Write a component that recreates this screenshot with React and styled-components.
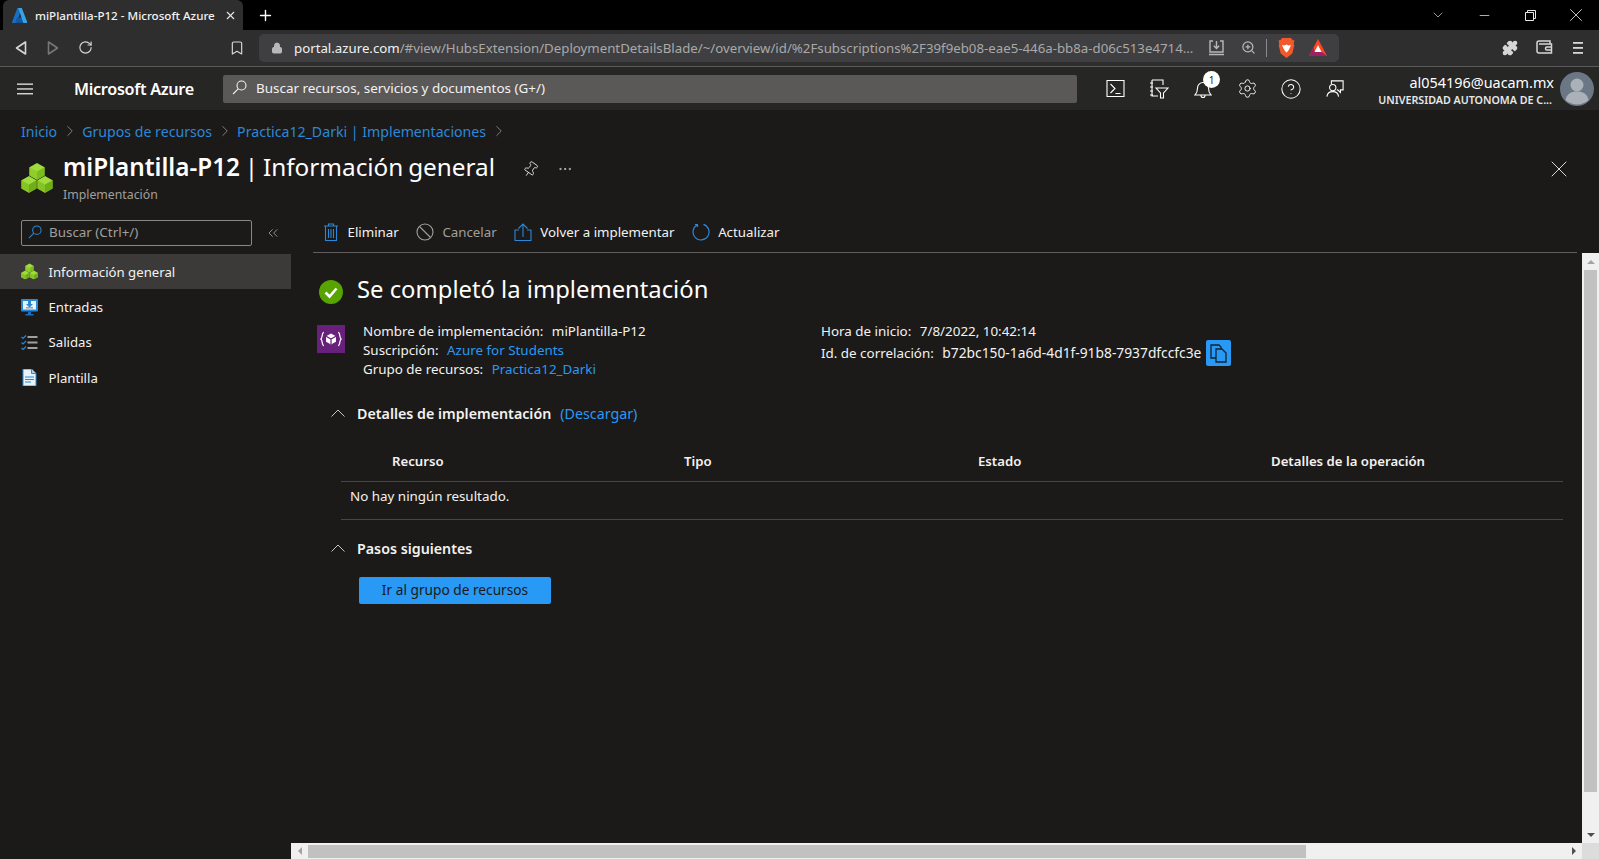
import React from "react";
import styled, { createGlobalStyle } from "styled-components";
import { ChevronRight, ChevronDown, ChevronsLeft, Minus, X, Pin, MoreHorizontal, Plus, Settings, CircleHelp, RotateCw, Bookmark, ZoomIn, Lock, Puzzle } from "lucide-react";

const colors = {
  black: "#000000",
  chrome: "#2e2e2e",
  omni: "#3f3f41",
  header: "#262625",
  page: "#1b1a19",
  active: "#3b3a39",
  blue: "#2899f5",
  link: "#2b88d8",
  line: "#484644",
  text: "#f3f2f1",
  muted: "#a19f9d",
  track: "#f0f0f0",
  thumb: "#c1c1c1",
};
const uiFont = `"Noto Sans", "Open Sans", "Liberation Sans", sans-serif`;

const GlobalStyle = createGlobalStyle`
  html, body { margin: 0; height: 100%; overflow: hidden; background: ${colors.page}; }
  body { font-family: ${uiFont}; font-size: 13px; color: ${colors.text}; }
  * { box-sizing: border-box; }
`;

const Page = styled.div`
  height: 859px;
  display: flex;
  flex-direction: column;
`;

/* browser chrome */
const TitleBar = styled.div`
  height: 30px;
  flex: none;
  background: ${colors.black};
  display: flex;
  align-items: stretch;
  padding-left: 3px;
`;
const Tab = styled.div`
  width: 240px;
  background: ${colors.chrome};
  border-radius: 6px 6px 0 0;
  display: flex;
  align-items: center;
  padding: 0 6px 0 9px;
  gap: 7px;
  font-size: 11.6px;
  font-weight: 500;
  white-space: nowrap;
`;
const TabTitle = styled.span`
  flex: 1;
`;
const NewTab = styled.div`
  width: 44px;
  display: flex;
  align-items: center;
  justify-content: center;
  color: #fff;
`;
const WindowControls = styled.div`
  margin-left: auto;
  display: flex;
  align-items: center;
  color: #e8e8e8;
`;
const WindowButton = styled.div`
  width: 46px;
  display: flex;
  align-items: center;
  justify-content: center;
`;
const Toolbar = styled.div`
  height: 37px;
  flex: none;
  background: ${colors.chrome};
  border-bottom: 1px solid #5a5a5a;
  display: flex;
  align-items: center;
  padding: 0 0 1px 5px;
`;
const ToolButton = styled.div`
  width: 32px;
  display: flex;
  align-items: center;
  justify-content: center;
  color: #d6d6d6;
`;
const ToolSpacer = styled.div`
  width: 120px;
`;
const Omnibox = styled.div`
  width: 1080px;
  height: 28px;
  margin-left: 6px;
  background: ${colors.omni};
  border-radius: 5px;
  display: flex;
  align-items: center;
  padding-left: 12px;
  color: #b8b8b8;
`;
const Url = styled.div`
  width: 906px;
  flex: none;
  margin-left: 11px;
  font-size: 13.25px;
  color: #a9a9a9;
  white-space: nowrap;
  overflow: hidden;
`;
const UrlHost = styled.span`
  color: #f1f1f1;
`;
const OmniIcon = styled.div`
  width: 32px;
  display: flex;
  justify-content: center;
  align-items: center;
`;
const OmniDivider = styled.div`
  width: 1px;
  height: 18px;
  background: #8a8a8a;
  margin: 0 3px 0 2px;
`;
const ToolRight = styled.div`
  margin-left: auto;
  display: flex;
  padding-right: 5px;
  gap: 2px;
`;

/* portal header */
const PortalHeader = styled.header`
  height: 43px;
  flex: none;
  background: ${colors.header};
  display: flex;
  align-items: center;
`;
const Hamburger = styled.div`
  width: 52px;
  padding-left: 17px;
  display: flex;
`;
const Brand = styled.div`
  width: 171px;
  padding-left: 22px;
  font-size: 16.2px;
  font-weight: 600;
  color: #fff;
  letter-spacing: -0.3px;
  white-space: nowrap;
`;
const GlobalSearch = styled.div`
  width: 854px;
  height: 28px;
  background: #5a5958;
  border-radius: 2px;
  display: flex;
  align-items: center;
  padding: 0 0 2px 9px;
  gap: 9px;
  font-size: 13.45px;
  color: #f3f2f1;
`;
const HeaderIcons = styled.div`
  display: flex;
  margin-left: 16px;
`;
const HeaderIcon = styled.div`
  width: 44px;
  height: 43px;
  display: flex;
  align-items: center;
  justify-content: center;
  position: relative;
  color: #fff;
`;
const Badge = styled.span`
  position: absolute;
  top: 4px;
  left: 22px;
  width: 17px;
  height: 17px;
  border-radius: 50%;
  background: #fff;
  color: #1b1a19;
  font-size: 10px;
  display: flex;
  align-items: center;
  justify-content: center;
`;
const Account = styled.div`
  margin-left: auto;
  display: flex;
  align-items: center;
  gap: 6px;
  padding-right: 5px;
`;
const AccountText = styled.div`
  text-align: right;
  white-space: nowrap;
  padding-top: 4px;
`;
const Email = styled.div`
  font-size: 14.4px;
  line-height: 18px;
  color: #fff;
`;
const Tenant = styled.div`
  font-size: 10.7px;
  line-height: 16px;
  font-weight: 600;
  color: #e8e8e8;
  padding-right: 2px;
`;

/* blade */
const Breadcrumb = styled.nav`
  height: 42px;
  flex: none;
  padding-left: 21px;
  display: flex;
  align-items: center;
  gap: 3.5px;
  font-size: 14.15px;
  color: ${colors.link};
`;
const CrumbArrow = styled.span`
  display: flex;
  color: ${colors.muted};
`;
const BladeHeader = styled.div`
  height: 68px;
  flex: none;
  display: flex;
  padding: 0 26px 0 21px;
`;
const BladeIcon = styled.div`
  width: 42px;
  padding-top: 10px;
`;
const BladeTitle = styled.div`
  font-size: 24.3px;
  line-height: 30px;
  word-spacing: -1.5px;
  color: #fff;
  white-space: nowrap;
`;
const Strong = styled.strong`
  font-weight: 600;
`;
const BladeSub = styled.div`
  font-size: 12.3px;
  line-height: 16px;
  margin-top: 5px;
  color: ${colors.muted};
`;
const BladeActions = styled.div`
  display: flex;
  align-items: center;
  height: 30px;
  margin: 2px 0 0 27px;
  gap: 18px;
  color: #e8e8e8;
`;
const BladeClose = styled.div`
  margin: 2px 0 0 auto;
  height: 30px;
  display: flex;
  align-items: center;
  color: #e8e8e8;
`;
const Split = styled.div`
  flex: 1;
  min-height: 0;
  display: flex;
`;

/* left menu */
const Sidebar = styled.aside`
  width: 291px;
  flex: none;
`;
const MenuSearchRow = styled.div`
  display: flex;
  align-items: center;
  padding-left: 21px;
  margin-bottom: 8px;
`;
const MenuSearch = styled.div`
  width: 231px;
  height: 26px;
  border: 1px solid #8a8886;
  border-radius: 2px;
  display: flex;
  align-items: center;
  padding: 0 0 2px 6px;
  gap: 7px;
  font-size: 13.4px;
  color: ${colors.muted};
`;
const Collapse = styled.div`
  margin-left: 13px;
  display: flex;
  color: #c8c6c4;
`;
const MenuItem = styled.div`
  height: 35.4px;
  display: flex;
  align-items: center;
  padding-left: 21px;
  gap: 10.5px;
  font-size: 13.2px;
  background: ${(p) => (p.$active ? colors.active : "transparent")};
`;
const MenuIcon = styled.span`
  width: 17px;
  height: 17px;
  display: flex;
`;

/* main column */
const Main = styled.main`
  flex: 1;
  min-width: 0;
  display: flex;
  flex-direction: column;
`;
const CommandBar = styled.div`
  height: 33px;
  flex: none;
  margin: 0 22px;
  padding-left: 8.5px;
  border-bottom: 1px solid #605e5c;
  display: flex;
  align-items: flex-start;
  gap: 17.6px;
`;
const Command = styled.div`
  height: 24px;
  display: flex;
  align-items: center;
  gap: 8px;
  font-size: 13.3px;
  white-space: nowrap;
  color: ${(p) => (p.$off ? colors.muted : colors.text)};
`;
const ScrollArea = styled.div`
  flex: 1;
  min-height: 0;
  display: flex;
`;
const Content = styled.div`
  flex: 1;
  min-width: 0;
`;
const StatusRow = styled.div`
  height: 30px;
  margin-top: 24px;
  padding-left: 28px;
  display: flex;
  align-items: center;
  gap: 14px;
`;
const StatusTitle = styled.h1`
  margin: 0 0 6px;
  font-size: 23.8px;
  line-height: 30px;
  font-weight: 400;
  color: #fff;
`;
const Summary = styled.div`
  display: flex;
  margin-top: 14px;
  padding-left: 26px;
`;
const DeployIcon = styled.div`
  width: 28px;
  height: 28px;
  margin: 4px 18px 0 0;
  background: #68217a;
  display: flex;
  align-items: center;
  justify-content: center;
`;
const SummaryCol = styled.div`
  width: ${(p) => p.$width || "auto"};
  flex: none;
`;
const InfoLine = styled.div`
  min-height: 19px;
  line-height: 18px;
  font-size: 13.4px;
  display: flex;
  align-items: center;
  gap: 8.5px;
  white-space: nowrap;
`;
const Guid = styled.span`
  font-size: 13.8px;
`;
const Link = styled.span`
  color: ${colors.blue};
`;
const CopyButton = styled.div`
  width: 25px;
  height: 26px;
  margin-left: -3.5px;
  background: ${colors.blue};
  border-radius: 2px;
  display: flex;
  align-items: center;
  justify-content: center;
`;
const SectionHead = styled.div`
  height: 20px;
  margin-top: ${(p) => p.$top}px;
  padding-left: 40px;
  display: flex;
  align-items: center;
  font-size: 14.25px;
`;
const SectionArrow = styled.span`
  width: 26px;
  display: flex;
`;
const SectionTitle = styled.strong`
  font-weight: 600;
  margin-right: 9px;
`;
const TableWrap = styled.div`
  margin: 18px 19px 0 50px;
`;
const TableHead = styled.div`
  height: 41px;
  padding-left: 51px;
  border-bottom: 1px solid ${colors.line};
  display: grid;
  grid-template-columns: 292px 294px 293px 1fr;
  align-items: center;
  font-size: 13.2px;
  font-weight: 600;
`;
const EmptyRow = styled.div`
  height: 38px;
  padding: 0 0 9px 9px;
  border-bottom: 1px solid ${colors.line};
  display: flex;
  align-items: center;
  font-size: 13.4px;
`;
const PrimaryButton = styled.button`
  display: block;
  width: 192px;
  height: 27px;
  margin: 19px 0 0 68px;
  padding: 0 0 3px;
  border: 0;
  border-radius: 2px;
  background: ${colors.blue};
  color: ${colors.page};
  font-family: inherit;
  font-size: 13.7px;
`;

/* scrollbars */
const VScroll = styled.div`
  width: 17px;
  flex: none;
  background: ${colors.track};
  display: flex;
  flex-direction: column;
  align-items: center;
`;
const VThumb = styled.div`
  width: 13px;
  height: 522px;
  flex: none;
  background: ${colors.thumb};
`;
const HScroll = styled.div`
  height: 16px;
  flex: none;
  background: ${colors.track};
  display: flex;
  align-items: center;
`;
const HThumb = styled.div`
  width: 998px;
  height: 13px;
  background: ${colors.thumb};
`;
const Track = styled.div`
  flex: 1;
`;
const Corner = styled.div`
  width: 17px;
  height: 16px;
  background: #dcdcdc;
`;
const ArrowCell = styled.div`
  width: 17px;
  height: ${(p) => (p.$vertical ? "17px" : "16px")};
  flex: none;
  display: flex;
  align-items: center;
  justify-content: center;
`;
const Triangle = styled.span`
  width: 0;
  height: 0;
  border-style: solid;
  border-color: transparent;
  ${(p) => p.$dir === "up" && `border-width: 0 4px 4px; border-bottom-color: ${p.$color};`}
  ${(p) => p.$dir === "down" && `border-width: 4px 4px 0; border-top-color: ${p.$color};`}
  ${(p) => p.$dir === "left" && `border-width: 4px 4px 4px 0; border-right-color: ${p.$color};`}
  ${(p) => p.$dir === "right" && `border-width: 4px 0 4px 4px; border-left-color: ${p.$color};`}
`;

/* drawings */
const Cubes = ({ size = 32 }) => (
  <svg width={size} height={size} viewBox="0 0 32 30">
    <path d="M16 0l7.5 4.2v8.4L16 16.8l-7.5-4.2V4.2z" fill="#a0dc3c" />
    <path d="M16 8.4v8.4l7.5-4.2V4.2z" fill="#7dbb1f" />
    <path d="M16 8.4v8.4l-7.5-4.2V4.2z" fill="#8fce2a" />
    <path d="M8 13l7.5 4.2v8.4L8 29.8.5 25.6v-8.4z" fill="#a0dc3c" />
    <path d="M8 21.4v8.4l7.5-4.2v-8.4z" fill="#6fae17" />
    <path d="M8 21.4v8.4L.5 25.6v-8.4z" fill="#86c425" />
    <path d="M24 13l7.5 4.2v8.4L24 29.8l-7.5-4.2v-8.4z" fill="#a0dc3c" />
    <path d="M24 21.4v8.4l7.5-4.2v-8.4z" fill="#6fae17" />
    <path d="M24 21.4v8.4l-7.5-4.2v-8.4z" fill="#86c425" />
  </svg>
);
const AzureLogo = () => (
  <svg width="16" height="15" viewBox="0 0 16 15">
    <path d="M5.4 0h4.2L5 14.2a1 1 0 0 1-.9.7H.8a.8.8 0 0 1-.7-1z" fill="#1b6ec2" />
    <path d="M11.6 9.6H4.9l-1.6 5.2h9.5z" fill="#0f5ba8" />
    <path d="M5.4 0h4.4l5.4 14a.7.7 0 0 1-.6.9h-3.3L6.5.6z" fill="#35a3e8" />
  </svg>
);
const BackArrow = ({ flip, color }) => (
  <svg width="14" height="16" viewBox="0 0 14 16" style={flip ? { transform: "scaleX(-1)" } : undefined}>
    <path d="M11.5 2v12L2.5 8z" fill="none" stroke={color} strokeWidth="1.6" strokeLinejoin="round" />
  </svg>
);
const InstallIcon = () => (
  <svg width="17" height="17" viewBox="0 0 17 17" fill="none" stroke="#b8b8b8" strokeWidth="1.4">
    <path d="M5 2H2v11h13V2h-3M1 15.5h15M8.5 2v7M5.8 6.8l2.7 2.7 2.7-2.7" />
  </svg>
);
const BraveIcon = () => (
  <svg width="17" height="20" viewBox="0 0 17 20">
    <path d="M4 0h9l1.5 2 2 .5-.7 3 .5 2-2 8L8.500 20l-5.800-4.500-2-8 .5-2-.7-3 2-.5z" fill="#f1592a" />
    <path d="M4 7l2.500.5 2-1 2 1L13 7l-1.500 3.500L10 13l-1.500 1.500L7 13l-1.500-2.500z" fill="#fff" />
  </svg>
);
const BatIcon = () => (
  <svg width="18" height="17" viewBox="0 0 18 17">
    <path d="M9 0l9 17H0z" fill="#ff4724" />
    <path d="M0 17l4.500-8.500L6 13h7l5 4z" fill="#9e1f63" />
    <path d="M9 6l3.500 7h-7z" fill="#fff" />
  </svg>
);
const WalletIcon = () => (
  <svg width="17" height="15" viewBox="0 0 17 15" fill="none" stroke="#d6d6d6" strokeWidth="1.5">
    <path d="M3 1h11v3M14 13H3a2 2 0 0 1-2-2V3a2 2 0 0 1 2-2M3 4h12.500v9H14M15.500 7H11a1.500 1.500 0 0 0 0 3h4.500" />
  </svg>
);
const DotsMenu = () => (
  <svg width="14" height="14" viewBox="0 0 14 14" fill="#d6d6d6">
    <rect x="2" y="1" width="10" height="1.800" /><rect x="2" y="6" width="10" height="1.800" /><rect x="2" y="11" width="10" height="1.800" />
  </svg>
);
const RestoreIcon = () => (
  <svg width="11" height="11" viewBox="0 0 11 11" fill="none" stroke="#e8e8e8">
    <path d="M.5 2.500h8v8h-8zM2.500 2.500v-2h8v8h-2" />
  </svg>
);
const MenuLines = () => (
  <svg width="16" height="12" viewBox="0 0 16 12" fill="#e8e8e8">
    <rect width="16" height="1.300" y="0.500" /><rect width="16" height="1.300" y="5.300" /><rect width="16" height="1.300" y="10.100" />
  </svg>
);
const ShellIcon = () => (
  <svg width="19" height="19" viewBox="0 0 19 19" fill="none" stroke="#fff" strokeWidth="1.100">
    <path d="M1 1.500h17v16H1zM4.500 5l4.500 4.500-4.500 4.500M9.500 14.500h5" />
  </svg>
);
const FilterBookIcon = () => (
  <svg width="20" height="20" viewBox="0 0 20 20" fill="none" stroke="#fff" strokeWidth="1.100">
    <path d="M3 1h11v5M9 17H3V1M1 4h3M1 8h3M1 12h3M1 16h3M7 9h12l-4.500 5v5h-3v-5z" />
  </svg>
);
const BellIcon = () => (
  <svg width="18" height="20" viewBox="0 0 18 20" fill="none" stroke="#fff" strokeWidth="1.100">
    <path d="M1 16h16c-2-2-2.500-4-2.500-7a5.500 5.500 0 0 0-11 0c0 3-.5 5-2.500 7zM7 16.500a2 2 0 0 0 4 0" />
  </svg>
);
const FeedbackIcon = () => (
  <svg width="18" height="19" viewBox="0 0 20 20" fill="none" stroke="#fff" strokeWidth="1.200">
    <path d="M6 5V1.500h13v10h-3v3l-3-3h-1" />
    <circle cx="7.500" cy="9" r="3.500" />
    <path d="M1 19c.5-3.500 3-5.500 6.500-5.500S13.500 15.500 14 19" />
  </svg>
);
const Avatar = () => (
  <svg width="34" height="34" viewBox="0 0 34 34">
    <circle cx="17" cy="17" r="17" fill="#6b7785" />
    <circle cx="17" cy="13" r="6.500" fill="#aab1b9" />
    <path d="M5.500 28c1-6 5.500-8.500 11.500-8.500S27.500 22 28.500 28a17 17 0 0 1-23 0z" fill="#aab1b9" />
  </svg>
);
const MagnifierIcon = ({ color, size = 15 }) => (
  <svg width={size} height={size} viewBox="0 0 15 15" fill="none" stroke={color} strokeWidth="1.100">
    <circle cx="9.500" cy="5.500" r="4.500" />
    <path d="M6.200 8.800L1 14" />
  </svg>
);
const TrashIcon = () => (
  <svg width="18" height="18" viewBox="0 0 18 18" fill="none" stroke={colors.link} strokeWidth="1.100">
    <path d="M2 3h14M6.500 3V1h5v2M3.500 3v14.500h11V3M6.500 6v9M9 6v9M11.500 6v9" />
  </svg>
);
const CancelIcon = () => (
  <svg width="18" height="18" viewBox="0 0 18 18" fill="none" stroke={colors.muted} strokeWidth="1.100">
    <circle cx="9" cy="9" r="8" />
    <path d="M3.500 3.500l11 11" />
  </svg>
);
const RedeployIcon = () => (
  <svg width="18" height="18" viewBox="0 0 18 18" fill="none" stroke={colors.link} strokeWidth="1.100">
    <path d="M5 7H1v10.500h16V7h-4M9 14V1M4.500 5.500L9 1l4.500 4.500" />
  </svg>
);
const RefreshIcon = () => (
  <svg width="18" height="18" viewBox="0 0 18 18" fill="none" stroke={colors.link} strokeWidth="1.200">
    <path d="M11.500 1.400A8 8 0 1 1 5 2.100M3 1.500h2.500V4" />
  </svg>
);
const CheckBadge = () => (
  <svg width="24" height="24" viewBox="0 0 24 24">
    <circle cx="12" cy="12" r="12" fill="#57a300" />
    <path d="M6.500 12.500l4 4 7-8" fill="none" stroke="#fff" strokeWidth="2.600" />
  </svg>
);
const BracesCube = () => (
  <svg width="22" height="18" viewBox="0 0 20 16" fill="none" stroke="#fff" strokeWidth="1.100">
    <path d="M3.500 2C1.500 2 2.500 7 .8 8c1.700 1 .7 6 2.700 6M16.500 2c2 0 1 5 2.700 6-1.700 1-.7 6-2.700 6" />
    <path d="M10 3l4.500 2.500v5L10 13l-4.500-2.500v-5z" fill="#fff" stroke="none" />
    <path d="M5.500 5.500L10 8l4.500-2.500M10 8v5" stroke="#68217a" />
  </svg>
);
const CopyIcon = () => (
  <svg width="17" height="19" viewBox="0 0 17 19" fill="none" stroke="#123" strokeWidth="1.300">
    <path d="M1 1h8l2 2v11H1z" fill="#2899f5" />
    <path d="M6 5h6l4 4v9H6z" fill="#2899f5" />
  </svg>
);
const InputsIcon = () => (
  <svg width="17" height="17" viewBox="0 0 17 17">
    <rect width="17" height="12.500" rx="1" fill="#2b88d8" />
    <rect x="2" y="2" width="13" height="8.500" fill="#e8f4fb" />
    <path d="M7 13h3v2h2.500v1.500h-8V15H7z" fill="#1b6ec2" />
    <path d="M7 2h3v3h2L8.500 8.500 5 5h2z" fill="#2b88d8" />
    <rect x="5" y="8" width="7" height="1.500" fill="#a19f9d" />
  </svg>
);
const OutputsIcon = () => (
  <svg width="17" height="17" viewBox="0 0 17 17" fill="none">
    <path d="M6.500 3h10M6.500 8.500h10M6.500 14h10" stroke="#a19f9d" strokeWidth="1.800" />
    <path d="M.5 3l1.500 1.500L5 1.500M.5 8.500L2 10l3-3M.5 14L2 15.500l3-3" stroke="#2b88d8" strokeWidth="1.100" />
  </svg>
);
const DocIcon = () => (
  <svg width="17" height="17" viewBox="0 0 17 17">
    <path d="M2 0h8.500L15 4.500V17H2z" fill="#e8f2fb" stroke="#2b88d8" />
    <path d="M10.500 0v4.500H15" fill="#a8d0f0" stroke="#2b88d8" />
    <path d="M4 8h9M4 10.500h9M4 13h6" stroke="#2b88d8" strokeWidth="1.200" />
  </svg>
);
const FoldChevron = () => (
  <svg width="14" height="8" viewBox="0 0 14 8" fill="none" stroke="#c8c6c4" strokeWidth="1">
    <path d="M.5 7.500L7 1l6.500 6.500" />
  </svg>
);

const crumbs = ["Inicio", "Grupos de recursos", "Practica12_Darki | Implementaciones"];

const menu = [
  { label: "Información general", icon: <Cubes size={17} />, active: true },
  { label: "Entradas", icon: <InputsIcon /> },
  { label: "Salidas", icon: <OutputsIcon /> },
  { label: "Plantilla", icon: <DocIcon /> },
];

const commands = [
  { label: "Eliminar", icon: <TrashIcon /> },
  { label: "Cancelar", icon: <CancelIcon />, off: true },
  { label: "Volver a implementar", icon: <RedeployIcon /> },
  { label: "Actualizar", icon: <RefreshIcon /> },
];

const columns = ["Recurso", "Tipo", "Estado", "Detalles de la operación"];

export default function App() {
  return (
    <Page>
      <GlobalStyle />
      <TitleBar>
        <Tab>
          <AzureLogo />
          <TabTitle>miPlantilla-P12 - Microsoft Azure</TabTitle>
          <X size={13} color="#e8e8e8" />
        </Tab>
        <NewTab>
          <Plus size={17} strokeWidth={2} />
        </NewTab>
        <WindowControls>
          <WindowButton>
            <ChevronDown size={16} strokeWidth={1} />
          </WindowButton>
          <WindowButton>
            <Minus size={15} strokeWidth={1.2} />
          </WindowButton>
          <WindowButton>
            <RestoreIcon />
          </WindowButton>
          <WindowButton>
            <X size={22} strokeWidth={0.9} />
          </WindowButton>
        </WindowControls>
      </TitleBar>

      <Toolbar>
        <ToolButton>
          <BackArrow color="#d6d6d6" />
        </ToolButton>
        <ToolButton>
          <BackArrow flip color="#777" />
        </ToolButton>
        <ToolButton>
          <RotateCw size={15} strokeWidth={1.8} />
        </ToolButton>
        <ToolSpacer />
        <ToolButton>
          <Bookmark size={16} strokeWidth={1.8} />
        </ToolButton>
        <Omnibox>
          <Lock size={12} fill="#b8b8b8" />
          <Url>
            <UrlHost>portal.azure.com</UrlHost>
            /#view/HubsExtension/DeploymentDetailsBlade/~/overview/id/%2Fsubscriptions%2F39f9eb08-eae5-446a-bb8a-d06c513e4714...
          </Url>
          <OmniIcon>
            <InstallIcon />
          </OmniIcon>
          <OmniIcon>
            <ZoomIn size={15} />
          </OmniIcon>
          <OmniDivider />
          <OmniIcon>
            <BraveIcon />
          </OmniIcon>
          <OmniIcon>
            <BatIcon />
          </OmniIcon>
        </Omnibox>
        <ToolRight>
          <ToolButton>
            <Puzzle size={16} fill="#d6d6d6" />
          </ToolButton>
          <ToolButton>
            <WalletIcon />
          </ToolButton>
          <ToolButton>
            <DotsMenu />
          </ToolButton>
        </ToolRight>
      </Toolbar>

      <PortalHeader>
        <Hamburger>
          <MenuLines />
        </Hamburger>
        <Brand>Microsoft Azure</Brand>
        <GlobalSearch>
          <MagnifierIcon color="#f3f2f1" />
          Buscar recursos, servicios y documentos (G+/)
        </GlobalSearch>
        <HeaderIcons>
          <HeaderIcon>
            <ShellIcon />
          </HeaderIcon>
          <HeaderIcon>
            <FilterBookIcon />
          </HeaderIcon>
          <HeaderIcon>
            <BellIcon />
            <Badge>1</Badge>
          </HeaderIcon>
          <HeaderIcon>
            <Settings size={21} strokeWidth={1.05} />
          </HeaderIcon>
          <HeaderIcon>
            <CircleHelp size={22} strokeWidth={1.1} />
          </HeaderIcon>
          <HeaderIcon>
            <FeedbackIcon />
          </HeaderIcon>
        </HeaderIcons>
        <Account>
          <AccountText>
            <Email>al054196@uacam.mx</Email>
            <Tenant>UNIVERSIDAD AUTONOMA DE C...</Tenant>
          </AccountText>
          <Avatar />
        </Account>
      </PortalHeader>

      <Breadcrumb>
        {crumbs.map((crumb) => (
          <React.Fragment key={crumb}>
            <span>{crumb}</span>
            <CrumbArrow>
              <ChevronRight size={18} strokeWidth={1} />
            </CrumbArrow>
          </React.Fragment>
        ))}
      </Breadcrumb>

      <BladeHeader>
        <BladeIcon>
          <Cubes />
        </BladeIcon>
        <div>
          <BladeTitle>
            <Strong>miPlantilla-P12</Strong> | Información general
          </BladeTitle>
          <BladeSub>Implementación</BladeSub>
        </div>
        <BladeActions>
          <Pin size={17} strokeWidth={1.2} style={{ transform: "rotate(35deg)" }} />
          <MoreHorizontal size={16} strokeWidth={1} />
        </BladeActions>
        <BladeClose>
          <X size={28} strokeWidth={0.8} />
        </BladeClose>
      </BladeHeader>

      <Split>
        <Sidebar>
          <MenuSearchRow>
            <MenuSearch>
              <MagnifierIcon color={colors.link} size={14} />
              Buscar (Ctrl+/)
            </MenuSearch>
            <Collapse>
              <ChevronsLeft size={16} strokeWidth={1} />
            </Collapse>
          </MenuSearchRow>
          {menu.map((item) => (
            <MenuItem key={item.label} $active={item.active}>
              <MenuIcon>{item.icon}</MenuIcon>
              {item.label}
            </MenuItem>
          ))}
        </Sidebar>

        <Main>
          <CommandBar>
            {commands.map((command) => (
              <Command key={command.label} $off={command.off}>
                {command.icon}
                {command.label}
              </Command>
            ))}
          </CommandBar>
          <ScrollArea>
            <Content>
              <StatusRow>
                <CheckBadge />
                <StatusTitle>Se completó la implementación</StatusTitle>
              </StatusRow>
              <Summary>
                <DeployIcon>
                  <BracesCube />
                </DeployIcon>
                <SummaryCol $width="458px">
                  <InfoLine>
                    Nombre de implementación: <span>miPlantilla-P12</span>
                  </InfoLine>
                  <InfoLine>
                    Suscripción: <Link>Azure for Students</Link>
                  </InfoLine>
                  <InfoLine>
                    Grupo de recursos: <Link>Practica12_Darki</Link>
                  </InfoLine>
                </SummaryCol>
                <SummaryCol>
                  <InfoLine>
                    Hora de inicio: <span>7/8/2022, 10:42:14</span>
                  </InfoLine>
                  <InfoLine>
                    Id. de correlación: <Guid>b72bc150-1a6d-4d1f-91b8-7937dfccfc3e</Guid>
                    <CopyButton>
                      <CopyIcon />
                    </CopyButton>
                  </InfoLine>
                </SummaryCol>
              </Summary>

              <SectionHead $top={25}>
                <SectionArrow>
                  <FoldChevron />
                </SectionArrow>
                <SectionTitle>Detalles de implementación</SectionTitle>
                <Link>(Descargar)</Link>
              </SectionHead>
              <TableWrap>
                <TableHead>
                  {columns.map((column) => (
                    <span key={column}>{column}</span>
                  ))}
                </TableHead>
                <EmptyRow>No hay ningún resultado.</EmptyRow>
              </TableWrap>

              <SectionHead $top={18}>
                <SectionArrow>
                  <FoldChevron />
                </SectionArrow>
                <SectionTitle>Pasos siguientes</SectionTitle>
              </SectionHead>
              <PrimaryButton>Ir al grupo de recursos</PrimaryButton>
            </Content>
            <VScroll>
              <ArrowCell $vertical>
                <Triangle $dir="up" $color="#a3a3a3" />
              </ArrowCell>
              <VThumb />
              <Track />
              <ArrowCell $vertical>
                <Triangle $dir="down" $color="#505050" />
              </ArrowCell>
            </VScroll>
          </ScrollArea>
          <HScroll>
            <ArrowCell>
              <Triangle $dir="left" $color="#a3a3a3" />
            </ArrowCell>
            <HThumb />
            <Track />
            <ArrowCell>
              <Triangle $dir="right" $color="#505050" />
            </ArrowCell>
            <Corner />
          </HScroll>
        </Main>
      </Split>
    </Page>
  );
}
